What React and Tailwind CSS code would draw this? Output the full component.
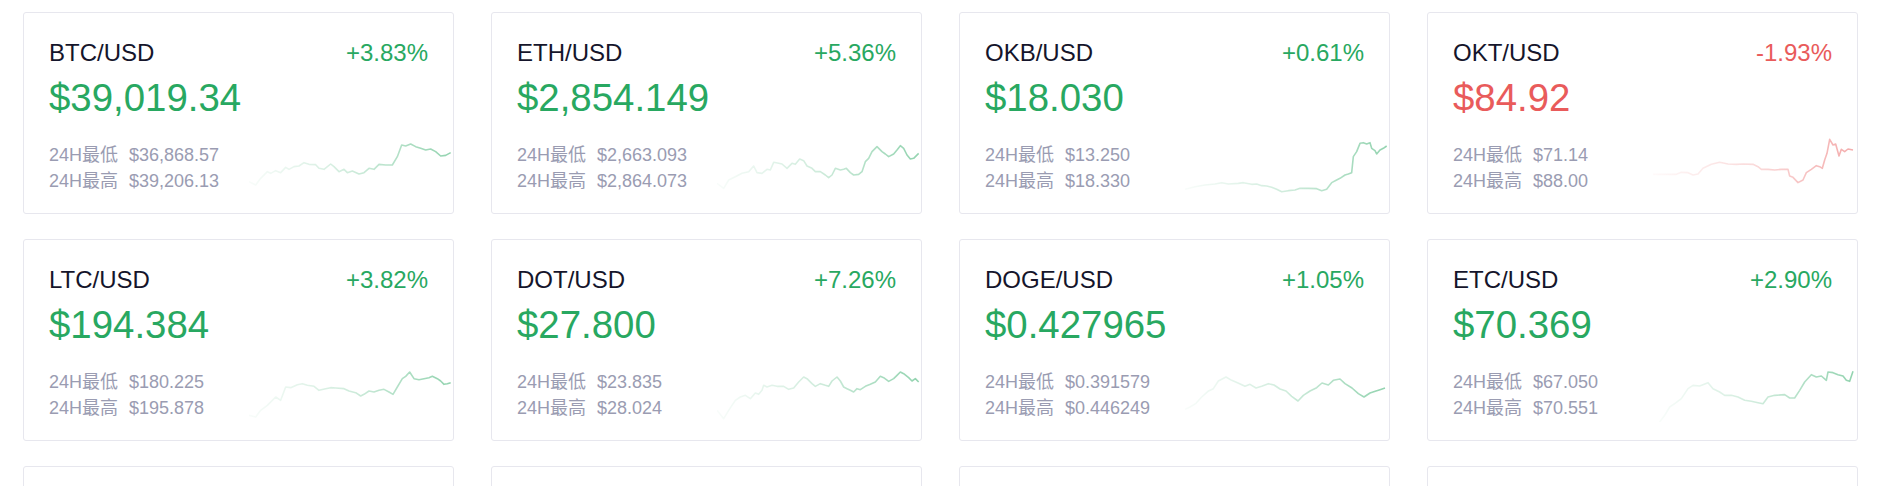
import React from "react";

const GREEN = "#28a861";
const RED = "#e95b5b";

// sparkline points are in a 615x195 box (3x the 205x65 chart)
const lines = {
  btc: [[0,155],[20,165],[35,145],[55,125],[65,130],[80,122],[95,128],[110,112],[120,118],[135,110],[150,108],[165,98],[180,103],[200,104],[210,115],[225,118],[245,102],[255,110],[270,125],[285,118],[295,128],[310,123],[330,132],[345,128],[360,115],[375,118],[390,103],[410,105],[430,105],[445,80],[458,45],[470,48],[485,42],[500,50],[515,55],[530,60],[545,57],[560,65],[575,78],[590,76],[605,68]],
  eth: [[0,160],[20,175],[35,150],[55,140],[75,130],[95,125],[110,108],[120,128],[135,130],[150,118],[160,120],[170,97],[185,100],[195,102],[210,115],[225,100],[235,103],[248,87],[260,92],[270,108],[285,115],[295,125],[310,125],[325,135],[335,143],[345,135],[355,115],[370,120],[380,118],[388,115],[400,128],[410,135],[425,133],[435,125],[445,95],[455,85],[465,65],[480,50],[495,65],[505,72],[515,80],[530,72],[540,60],[550,47],[560,55],[570,75],[580,87],[590,85],[605,70]],
  okb: [[0,178],[30,170],[60,165],[90,162],[110,158],[130,162],[160,160],[175,158],[200,163],[215,162],[230,167],[245,168],[260,172],[275,178],[290,185],[310,182],[330,180],[345,175],[370,175],[395,176],[410,182],[425,178],[440,158],[455,150],[465,145],[480,135],[490,132],[500,128],[505,80],[515,65],[525,40],[535,38],[545,42],[555,38],[560,55],[570,62],[575,72],[585,60],[595,55],[605,48]],
  okt: [[0,133],[40,133],[70,133],[85,127],[105,128],[120,135],[135,132],[150,115],[175,103],[200,97],[225,102],[250,103],[270,102],[300,103],[315,110],[325,118],[345,118],[365,120],[385,118],[405,118],[410,138],[420,142],[435,158],[450,150],[460,128],[475,118],[490,107],[500,110],[508,115],[515,90],[522,70],[530,28],[540,45],[548,42],[558,78],[565,58],[575,65],[585,57],[600,60]],
  ltc: [[0,175],[20,180],[35,160],[55,145],[80,120],[95,130],[110,90],[125,92],[145,83],[160,80],[175,85],[195,88],[210,100],[230,95],[245,92],[260,93],[285,95],[300,102],[320,107],[335,117],[345,112],[360,102],[375,105],[390,100],[405,97],[420,105],[432,112],[445,90],[460,65],[470,58],[482,45],[495,65],[510,68],[525,65],[540,62],[550,58],[565,65],[575,72],[585,82],[595,80],[605,77]],
  dot: [[0,160],[20,185],[35,160],[55,130],[70,120],[85,115],[100,125],[115,108],[125,112],[135,100],[140,85],[150,90],[165,85],[180,88],[200,88],[215,97],[230,93],[245,75],[260,60],[270,65],[285,80],[295,88],[310,80],[325,85],[335,88],[345,72],[360,60],[370,72],[380,90],[390,95],[400,100],[410,105],[420,95],[430,98],[445,88],[460,82],[475,75],[490,58],[500,62],[515,73],[530,65],[540,55],[550,45],[560,50],[575,62],[585,72],[595,65],[605,75]],
  doge: [[0,157],[15,150],[33,139],[50,120],[69,103],[85,95],[100,72],[123,60],[140,70],[159,78],[180,88],[195,82],[213,93],[230,88],[250,80],[267,84],[285,96],[303,102],[320,118],[339,132],[355,115],[375,102],[395,92],[411,78],[430,84],[445,70],[465,66],[480,80],[501,93],[520,110],[537,120],[555,108],[573,102],[585,98],[600,93]],
  etc: [[20,195],[35,175],[50,150],[65,140],[85,125],[105,95],[120,85],[140,87],[165,77],[180,95],[200,105],[215,115],[235,115],[255,120],[275,130],[295,133],[315,137],[330,140],[345,120],[365,115],[395,113],[410,123],[425,123],[440,100],[455,75],[475,53],[490,60],[505,57],[520,70],[525,45],[540,47],[555,53],[570,57],[580,70],[590,73],[600,43]],
};

const coins = [
  { pair: "BTC/USD", change: "+3.83%", price: "$39,019.34", low: "$36,868.57", high: "$39,206.13", line: "btc" },
  { pair: "ETH/USD", change: "+5.36%", price: "$2,854.149", low: "$2,663.093", high: "$2,864.073", line: "eth" },
  { pair: "OKB/USD", change: "+0.61%", price: "$18.030", low: "$13.250", high: "$18.330", line: "okb" },
  { pair: "OKT/USD", change: "-1.93%", price: "$84.92", low: "$71.14", high: "$88.00", line: "okt", down: true },
  { pair: "LTC/USD", change: "+3.82%", price: "$194.384", low: "$180.225", high: "$195.878", line: "ltc" },
  { pair: "DOT/USD", change: "+7.26%", price: "$27.800", low: "$23.835", high: "$28.024", line: "dot" },
  { pair: "DOGE/USD", change: "+1.05%", price: "$0.427965", low: "$0.391579", high: "$0.446249", line: "doge" },
  { pair: "ETC/USD", change: "+2.90%", price: "$70.369", low: "$67.050", high: "$70.551", line: "etc" },
];

const Sparkline = ({ id, points, color }) => {
  const d = points.map((p, i) => `${i === 0 ? "M" : "L"}${p[0]},${p[1]}`).join(" ");
  return (
    <svg
      className="w-[204px] h-[65px] shrink-0 mr-[-25px]"
      viewBox="0 0 612 195"
      preserveAspectRatio="none"
    >
      <defs>
        <linearGradient id={id} x1="0" y1="0" x2="1" y2="0">
          <stop offset="0" stopColor={color} stopOpacity="0.03" />
          <stop offset="0.5" stopColor={color} stopOpacity="0.22" />
          <stop offset="1" stopColor={color} stopOpacity="0.5" />
        </linearGradient>
      </defs>
      <path
        d={d}
        fill="none"
        stroke={`url(#${id})`}
        strokeWidth="1.6"
        strokeLinejoin="round"
        vectorEffect="non-scaling-stroke"
      />
    </svg>
  );
};

const CoinCard = ({ coin, idx }) => {
  const color = coin.down ? RED : GREEN;
  return (
    <div className="h-[202px] bg-white border border-[#e7e7ee] rounded-[3px] pt-[25px] pl-[25px] pr-[25px] overflow-hidden">
      <div className="flex justify-between items-center text-[24px] leading-[29px]">
        <span className="text-[#15152b]">{coin.pair}</span>
        <span className={coin.down ? "text-[#e95b5b]" : "text-[#28a861]"}>{coin.change}</span>
      </div>
      <div
        className={`mt-[8px] text-[38.4px] leading-[45px] ${coin.down ? "text-[#e95b5b]" : "text-[#28a861]"}`}
      >
        {coin.price}
      </div>
      <div className="mt-[10px] flex justify-between items-end">
        <div className="text-[18px] leading-[26.6px] text-[#9a9cb2] whitespace-nowrap">
          <div>
            <span className="inline-block w-[80px]">24H最低</span>
            <span>{coin.low}</span>
          </div>
          <div>
            <span className="inline-block w-[80px]">24H最高</span>
            <span>{coin.high}</span>
          </div>
        </div>
        <Sparkline id={`spark-${idx}`} points={lines[coin.line]} color={color} />
      </div>
    </div>
  );
};

const App = () => {
  return (
    <div
      className="h-[486px] overflow-hidden bg-white pt-[12px] pl-[23px] pr-[20px]"
      style={{ fontFamily: '"Liberation Sans", Arial, "Noto Sans CJK SC", sans-serif' }}
    >
      <div className="grid grid-cols-4 gap-x-[37px] gap-y-[25px]">
        {coins.map((coin, i) => (
          <CoinCard key={coin.pair} coin={coin} idx={i} />
        ))}
        {/* next row, still loading below the fold */}
        {[0, 1, 2, 3].map((i) => (
          <div key={i} className="h-[202px] bg-white border border-[#e7e7ee] rounded-[3px]" />
        ))}
      </div>
    </div>
  );
};

export default App;
